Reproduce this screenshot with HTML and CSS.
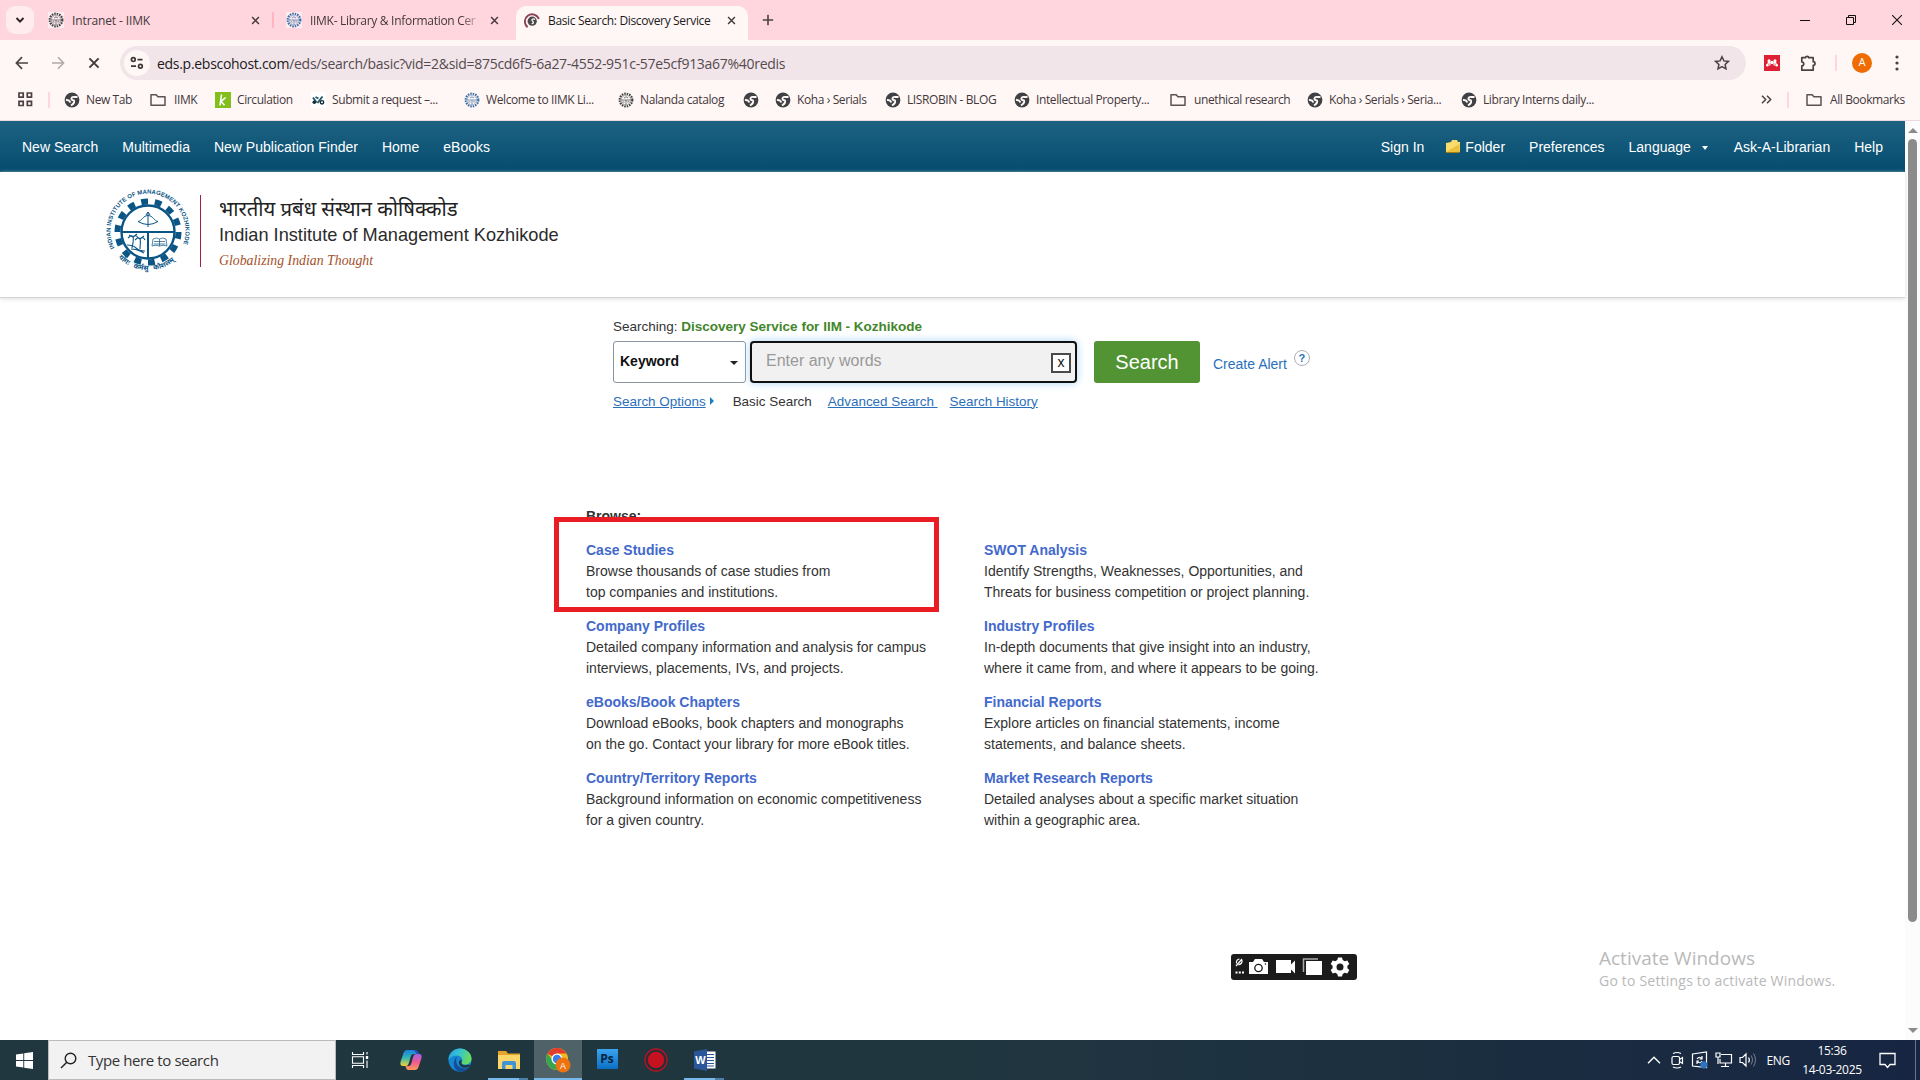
FILE: index.html
```html
<!DOCTYPE html>
<html lang="en">
<head>
    <meta charset="utf-8">
    <title>Basic Search: Discovery Service for IIM - Kozhikode</title>
    <link rel="stylesheet" href="styles.css">
</head>
<body>
    <!-- shared icons -->
    <svg class="defs" width="0" height="0">
        <symbol id="globe" viewBox="0 0 16 16">
            <circle cx="8" cy="8" r="7.4" fill="#3f4145"/>
            <path d="M13.500 5H10.500Q8 4.500 7.500 6.300T10 8.500Q11 11 7 13.500M2 7.800l3 .7 1.500 2" fill="none" stroke="#fff7f6" stroke-width="1.900"/>
        </symbol>
        <symbol id="folder" viewBox="0 0 16 16">
            <path d="M1 13.200V2.800h5.200l1.700 1.900h7.100v8.500z" fill="none" stroke="#5c5054" stroke-width="1.500" stroke-linejoin="round"/>
        </symbol>
        <symbol id="gear" viewBox="0 0 16 16">
            <circle cx="8" cy="8" r="6.300" fill="none" stroke="currentColor" stroke-width="2.200" stroke-dasharray="1.500 .97"/>
            <circle cx="8" cy="8" r="4.700" fill="none" stroke="currentColor" stroke-width=".4"/>
            <path d="M3.500 8h9M8 8v4.500M6 6q2-2.500 4 0M4.500 10h2M9.300 9.800h2" fill="none" stroke="currentColor" stroke-width=".7"/>
        </symbol>
        <symbol id="x" viewBox="0 0 10 10">
            <path d="M1.200 1.200l7.600 7.600M8.800 1.200L1.200 8.800" stroke="#43373b" stroke-width="1.600"/>
        </symbol>
    </svg>

    <div class="tabstrip">
        <div class="tab-search"><svg width="10" height="10" viewBox="0 0 10 10"><path d="M1.500 3l3.500 3.600L8.500 3" fill="none" stroke="#2b2023" stroke-width="1.900"/></svg></div>
        <div class="tab tab-one">
            <svg class="fav gray" width="16" height="16"><use href="#gear"/></svg>
            <span class="tab-title">Intranet - IIMK</span>
            <svg width="9" height="9"><use href="#x"/></svg>
        </div>
        <div class="tab tab-two">
            <svg class="fav blue" width="16" height="16"><use href="#gear"/></svg>
            <span class="tab-title fade">IIMK- Library &amp; Information Cer</span>
            <svg width="9" height="9"><use href="#x"/></svg>
        </div>
        <div class="tab tab-active">
            <svg width="16" height="16" viewBox="0 0 16 16"><path d="M3.600 14.200A7.200 7.200 0 1 1 14.800 6" fill="none" stroke="#8d4054" stroke-width="1.900"/><circle cx="8.200" cy="8.200" r="4.600" fill="#4a4a4e"/><path d="M11 6.500c-2-1.500-4 .3-2.500 1.500s1 2.500-.8 2.700" fill="none" stroke="#fff" stroke-width="1.200"/></svg>
            <span class="tab-title">Basic Search: Discovery Service</span>
            <svg width="9" height="9"><use href="#x"/></svg>
        </div>
        <svg class="new-tab" width="12" height="12" viewBox="0 0 12 12"><path d="M6 .8v10.400M.8 6h10.400" stroke="#4d4044" stroke-width="1.600"/></svg>
        <div class="window-buttons">
            <svg width="10" height="10"><path d="M0 5.500h10" stroke="#111"/></svg>
            <svg width="10" height="10"><path d="M.5 2.500h7v7h-7zM2.500 2.500v-2h7v7h-2" fill="none" stroke="#111"/></svg>
            <svg width="10" height="10"><path d="M0 0l10 10M10 0L0 10" stroke="#111" stroke-width="1.100"/></svg>
        </div>
    </div>

    <div class="toolbar">
        <svg width="14" height="14" viewBox="0 0 14 14"><path d="M13 7H1.500M7 1.200L1.400 7 7 12.800" fill="none" stroke="#4d4044" stroke-width="1.700"/></svg>
        <svg width="14" height="14" viewBox="0 0 14 14"><path d="M1 7h11.500M7 1.200L12.600 7 7 12.800" fill="none" stroke="#b3a8ab" stroke-width="1.600"/></svg>
        <svg class="stop" width="12" height="12" viewBox="0 0 10 10"><use href="#x"/></svg>
        <div class="omnibox">
            <div class="site-info"><svg width="14" height="14" viewBox="0 0 14 14"><g fill="none" stroke="#3f3337" stroke-width="1.700"><circle cx="3.300" cy="3.600" r="1.900"/><path d="M7.500 3.600h5M1 10.200h5"/><circle cx="10.400" cy="10.200" r="1.900"/></g></svg></div>
            <span class="url"><b>eds.p.ebscohost.com</b>/eds/search/basic?vid=2&amp;sid=875cd6f5-6a27-4552-951c-57e5cf913a67%40redis</span>
            <svg width="16" height="16" viewBox="0 0 16 16"><path d="M8 1.800l1.900 4.100 4.500.5-3.300 3 .9 4.500L8 11.700l-4 2.200.9-4.500-3.300-3 4.500-.5z" fill="none" stroke="#4d4044" stroke-width="1.500"/></svg>
        </div>
        <svg class="mendeley" width="16" height="16" viewBox="0 0 16 16"><path d="M0 0h16v16H0z" fill="#dd2033"/><g fill="#fff"><circle cx="5" cy="5.700" r="1.500"/><circle cx="11" cy="5.700" r="1.500"/><circle cx="8" cy="7.500" r="1.700"/><circle cx="3.300" cy="10.300" r="1.300"/><circle cx="12.700" cy="10.300" r="1.300"/></g><path d="M5 6L3.500 10M11 6l1.500 4M5.500 6q.5 2.500.3 4.500M10.500 6q-.5 2.500-.3 4.500" stroke="#fff" stroke-width="1.300"/></svg>
        <svg class="puzzle" width="17" height="17" viewBox="0 0 17 17"><path d="M1.800 2.700h3.700c0-1.800 3.200-1.800 3.200 0h4.500v4c2.400 0 2.400 3.600 0 3.600v4.900H1.800v-4.400c2.600-.2 2.600-3.600 0-3.800z" fill="none" stroke="#4d4044" stroke-width="1.700" stroke-linejoin="round"/></svg>
        <i class="sep"></i>
        <span class="avatar">A</span>
        <svg width="4" height="16"><g fill="#4d4044"><circle cx="2" cy="2" r="1.600"/><circle cx="2" cy="8" r="1.600"/><circle cx="2" cy="14" r="1.600"/></g></svg>
    </div>

    <div class="bookmarks">
        <svg width="15" height="15" viewBox="0 0 15 15"><path d="M1 1h4.200v4.200H1zM9.300 1h4.200v4.200H9.300zM1 9.300h4.200v4.200H1zM9.300 9.300h4.200v4.200H9.300z" fill="none" stroke="#4d4044" stroke-width="1.700"/></svg>
        <i class="sep"></i>
        <div class="bookmark-list">
            <span><svg><use href="#globe"/></svg>New Tab</span>
            <span class="dir"><svg><use href="#folder"/></svg>IIMK</span>
            <span><svg viewBox="0 0 16 16"><path d="M0 0h16v16H0z" fill="#82bf1c"/><path d="M6.500 2.500L5 13.500M10.700 5.500L6 9.300l3.500 4" fill="none" stroke="#fff" stroke-width="1.600"/></svg>Circulation</span>
            <span><svg viewBox="0 0 16 16"><path d="M1 0h15v16H1z" fill="#fff"/><path d="M3 5.500l3.500 5M12.500 4.500L7.500 11M5.500 5l3 1.500" stroke="#1f5968" stroke-width="1.900"/><circle cx="4.300" cy="10.300" r="1.800" fill="#112d3b"/><circle cx="12" cy="10.300" r="1.700" fill="none" stroke="#112d3b" stroke-width="1.400"/></svg>Submit a request –...</span>
            <span><svg class="blue"><use href="#gear"/></svg>Welcome to IIMK Li...</span>
            <span><svg class="gray"><use href="#gear"/></svg>Nalanda catalog</span>
            <span><svg><use href="#globe"/></svg></span>
            <span><svg><use href="#globe"/></svg>Koha › Serials</span>
            <span><svg><use href="#globe"/></svg>LISROBIN - BLOG</span>
            <span><svg><use href="#globe"/></svg>Intellectual Property...</span>
            <span class="dir"><svg><use href="#folder"/></svg>unethical research</span>
            <span><svg><use href="#globe"/></svg>Koha › Serials › Seria...</span>
            <span><svg><use href="#globe"/></svg>Library Interns daily...</span>
        </div>
        <svg class="more" width="11" height="9" viewBox="0 0 11 9"><path d="M1 .8l3.700 3.700L1 8.200M6 .8l3.700 3.700L6 8.200" fill="none" stroke="#4d4044" stroke-width="1.500"/></svg>
        <i class="sep"></i>
        <span class="dir all"><svg><use href="#folder"/></svg>All Bookmarks</span>
    </div>

    <div class="viewport">
        <div class="page">
            <nav class="topnav">
                <a>New Search</a>
                <a>Multimedia</a>
                <a>New Publication Finder</a>
                <a>Home</a>
                <a>eBooks</a>
                <a class="sign-in">Sign In</a>
                <a class="folder-link"><svg width="16" height="15" viewBox="0 0 16 15"><path d="M1 4l5-1 1-2h5l1 2h2v9l-1 1.500H1z" fill="#f8dc6c"/><path d="M1 13L14.500 5v8z" fill="#ecc13c"/><path d="M1 13.500h13.500" stroke="#a87c15"/></svg>Folder</a>
                <a>Preferences</a>
                <a class="lang">Language <i></i></a>
                <a>Ask-A-Librarian</a>
                <a>Help</a>
            </nav>

            <header class="brand">
                <svg class="logo" width="96" height="96" viewBox="0 0 96 96">
                    <defs>
                        <path id="ring-top" d="M14.500 64A37.500 37.500 0 1 1 81.500 64"/>
                        <path id="ring-bottom" d="M15 70A41.500 41.500 0 0 0 81 70"/>
                    </defs>
                    <g fill="none" stroke="#0b5585">
                        <circle cx="48" cy="48" r="30.500" stroke-width="6" pathLength="28" stroke-dasharray="1 1"/>
                        <circle cx="48" cy="48" r="26.500" stroke-width="2.400"/>
                        <path d="M21 48h54M48 48v26" stroke-width="2"/>
                        <path d="M38 37.500c4-.5 5-6 10-6s6 5.500 10 6M38 37.500q5 3 10 3t10-3M48 28v15M46 31l2-3 2 3" stroke-width="1"/>
                        <path d="M32 64c1-5 2-8 1-12M40 65c0-4 1-7 0-11M28 54q4-4 5-1 3-3 5 1M35 56q4-4 5-1 3-3 5 1M29 51l4 2 4-3M37 53l3 2 4-3M27 61q6 0 9 3t9 3M31 65q6 0 13 4" stroke-width="1.100"/>
                        <path d="M53 55q4-2 6.500 0 3-2 6.500 0l1 7q-4-1.500-7.500 0-3.500-1.500-7.500 0zM59.500 55v7M54 57.500h11M53.500 60h12" stroke-width=".7"/>
                    </g>
                    <text class="ring-text"><textPath href="#ring-top" textLength="148">INDIAN INSTITUTE OF MANAGEMENT KOZHIKODE</textPath></text>
                    <text class="ring-motto"><textPath href="#ring-bottom" startOffset="5">योगः &#160; कर्मसु &#160; कौशलम्</textPath></text>
                </svg>
                <div class="brand-text">
                    <div class="hindi">भारतीय प्रबंध संस्थान कोषिक्कोड</div>
                    <div class="english">Indian Institute of Management Kozhikode</div>
                    <div class="tagline">Globalizing Indian Thought</div>
                </div>
            </header>

            <section class="search">
                <div class="searching">Searching: <b>Discovery Service for IIM - Kozhikode</b></div>
                <div class="search-row">
                    <div class="field-select">Keyword<i></i></div>
                    <div class="field-input">Enter any words<span class="clear">x</span></div>
                    <div class="search-button">Search</div>
                    <a class="alert">Create Alert</a>
                    <span class="help">?</span>
                </div>
                <div class="search-links">
                    <a class="options">Search Options</a><i></i>
                    <span>Basic Search</span>
                    <a class="advanced">Advanced Search&nbsp;</a>
                    <a>Search History</a>
                </div>
            </section>

            <section class="browse">
                <h2>Browse:</h2>
                <div class="mark"></div>
                <div class="topics">
                    <div><h3>Case Studies</h3>Browse thousands of case studies from<br>top companies and institutions.</div>
                    <div><h3>SWOT Analysis</h3>Identify Strengths, Weaknesses, Opportunities, and<br>Threats for business competition or project planning.</div>
                    <div><h3>Company Profiles</h3>Detailed company information and analysis for campus<br>interviews, placements, IVs, and projects.</div>
                    <div><h3>Industry Profiles</h3>In-depth documents that give insight into an industry,<br>where it came from, and where it appears to be going.</div>
                    <div><h3>eBooks/Book Chapters</h3>Download eBooks, book chapters and monographs<br>on the go. Contact your library for more eBook titles.</div>
                    <div><h3>Financial Reports</h3>Explore articles on financial statements, income<br>statements, and balance sheets.</div>
                    <div><h3>Country/Territory Reports</h3>Background information on economic competitiveness<br>for a given country.</div>
                    <div><h3>Market Research Reports</h3>Detailed analyses about a specific market situation<br>within a geographic area.</div>
                </div>
            </section>
        </div>
        <div class="scrollbar"><i class="up"></i><i class="thumb"></i><i class="down"></i></div>
    </div>

    <div class="recorder">
        <svg width="126" height="26" viewBox="0 0 126 26">
            <g fill="#fff">
                <path d="M4.500 17.500h2v2h-2zM7.800 17.500h2v2h-2zM11 17.500h2v2h-2z"/>
                <path d="M18 8h4l2-3h7l2 3h4v12H18z"/>
                <path d="M45 6h15v4.500l4-4v13l-4-4V19H45z"/>
                <path d="M75 7h16v14H75z"/>
                <path d="M107 3.500h4l.7 2.600 2 1.100 2.600-.8 2 3.500-1.900 1.900v2.400l1.900 1.900-2 3.500-2.600-.8-2 1.100-.7 2.600h-4l-.7-2.600-2-1.100-2.600.8-2-3.500 1.900-1.900v-2.400L99.700 9.900l2-3.500 2.600.8 2-1.100z"/>
            </g>
            <circle cx="27.500" cy="14" r="3.700" fill="none" stroke="#1b1b1b" stroke-width="1.300"/>
            <circle cx="34.500" cy="10" r=".8" fill="#1b1b1b"/>
            <path d="M72.500 18V5H87" fill="none" stroke="#aaa" stroke-width="1.500"/>
            <circle cx="109" cy="13" r="3.500" fill="#1b1b1b"/>
            <path d="M5 12l6-7M5.500 9.500q-.5-4 3-4.500M11 6q.5 4-3.500 4.800" fill="none" stroke="#fff" stroke-width="1.200"/>
        </svg>
    </div>
    <div class="watermark"><div>Activate Windows</div><p>Go to Settings to activate Windows.</p></div>

    <div class="taskbar">
        <div class="start"><svg width="17" height="17" viewBox="0 0 17 17"><path d="M0 2.400l7.300-1V8H0zM8.200 1.300L17 0v8H8.200zM0 9h7.300v6.600L0 14.600zM8.200 9H17v8l-8.800-1.300z" fill="#fff"/></svg></div>
        <div class="task-search">
            <svg width="17" height="17" viewBox="0 0 17 17"><circle cx="10.500" cy="6.500" r="5.300" fill="none" stroke="#222" stroke-width="1.400"/><path d="M6.800 10.300L1 16" stroke="#222" stroke-width="1.500"/></svg>
            <span>Type here to search</span>
        </div>
        <div class="apps">
            <div class="task-view"><svg width="18" height="16" viewBox="0 0 18 16"><path d="M1.500 0v2.500h11V0M1.500 16v-2.500h11V16M1.500 4.800h11v6.400h-11zM16 0v2.500M16 8.500V16" fill="none" stroke="#fff" stroke-width="1.100"/><path d="M14.800 4h2.400v3h-2.400z" fill="#fff"/></svg></div>
            <div>
                <svg width="24" height="24" viewBox="0 0 24 24">
                    <defs>
                        <linearGradient id="cp1" x2="0" y2="1"><stop offset="0" stop-color="#1a7fe0"/><stop offset=".5" stop-color="#35b8b0"/><stop offset="1" stop-color="#f2d238"/></linearGradient>
                        <linearGradient id="cp2" x2="0" y2="1"><stop offset="0" stop-color="#a263e6"/><stop offset=".5" stop-color="#ee5a92"/><stop offset="1" stop-color="#ff9a55"/></linearGradient>
                    </defs>
                    <path d="M8 2h6.500q2 0 2.700 2.500L17.500 6h-3q-2 0-2.600 2L9.500 16q-.7 2-2.700 2H4Q.8 18 1.500 14L4.500 5Q5.500 2 8 2z" fill="url(#cp1)"/>
                    <path d="M16 22H9.500q-2 0-2.700-2.500L6.500 18h3q2 0 2.600-2l2.400-8q.7-2 2.700-2H20q3.200 0 2.500 4l-3 9q-1 3-3.500 3z" fill="url(#cp2)"/>
                    <path d="M13.500 2q2.500 0 3.500 4h3l-1-2q-1-2-3-2z" fill="#2356c4"/>
                </svg>
            </div>
            <div>
                <svg width="24" height="24" viewBox="0 0 24 24">
                    <defs><linearGradient id="edge" x2="1" y2=".3"><stop offset="0" stop-color="#279de3"/><stop offset=".5" stop-color="#36c4cf"/><stop offset="1" stop-color="#67db60"/></linearGradient></defs>
                    <circle cx="12" cy="12" r="11.500" fill="#1687d3"/>
                    <path d="M.5 12C.5 5 6 .5 12 .5S23.500 5 23.500 10.500c0 4-3 6-6.500 6-3 0-4-1.200-3.500-2.200 2.500-3.500-1-6.800-4.500-6.800-4 0-7 2-8.500 4.500z" fill="url(#edge)"/>
                    <path d="M9.500 8C7 11 7.500 19 15 20.300c3 .4 5.500-.6 7-1.800-3 4.500-7.500 5.500-11 4.900C5 22 3.500 12 9.500 8z" fill="#124f98"/>
                    <path d="M13.500 14.300c-.8 3 4 3.400 7 2.200l2 1c-3 3.200-10.500 3-11.500-2-.4-2.500 1-3.500 2.700-4z" fill="#203740"/>
                </svg>
            </div>
            <div class="open">
                <svg width="22" height="18" viewBox="0 0 22 18"><path d="M0 0h8l2 2.500h12V18H0z" fill="#e5a52c"/><path d="M0 4h22v14H0z" fill="#fcd669"/><path d="M4 18V12q0-2 2-2h10q2 0 2 2v6h-3.500v-4h-7v4z" fill="#4093d6"/></svg>
            </div>
            <div class="open current">
                <svg width="26" height="26" viewBox="0 0 26 26">
                    <circle cx="12" cy="12" r="11" fill="#f2ba1d"/>
                    <path d="M12 12L2.500 6.500A11 11 0 0 1 21.500 6.500H12z" fill="#e33b2e"/>
                    <path d="M2.500 6.500A11 11 0 0 0 12 23l4.500-8.500L8 14z" fill="#35a552"/>
                    <circle cx="12" cy="12" r="5.500" fill="#fff"/><circle cx="12" cy="12" r="4.200" fill="#3a7ced"/>
                    <circle cx="18" cy="18" r="7.500" fill="#ee7310"/>
                    <text class="chrome-a" x="18" y="21.500">A</text>
                </svg>
            </div>
            <div><span class="ps">Ps</span></div>
            <div><svg width="24" height="24" viewBox="0 0 24 24"><circle cx="12" cy="12" r="11" fill="#262d36" stroke="#b41523" stroke-width="1.300"/><circle cx="12" cy="12" r="8.300" fill="#c41220"/></svg></div>
            <div class="open">
                <svg width="22" height="22" viewBox="0 0 22 22"><path d="M11 2.500h10.500v17H11z" fill="#fff"/><path d="M13 5.500h7M13 8.500h7M13 11.500h7M13 14.500h7M13 17h7" stroke="#2b579a" stroke-width="1.200"/><path d="M0 2.500L13 0v22L0 19.500z" fill="#2b579a"/><text class="word-w" x="6.500" y="15.300">W</text></svg>
            </div>
        </div>
        <div class="tray">
            <svg width="14" height="8" viewBox="0 0 14 8"><path d="M1 7.300L7 1.300l6 6" fill="none" stroke="#fff" stroke-width="1.400"/></svg>
            <svg class="meet" width="14" height="18" viewBox="0 0 14 18"><g fill="none" stroke="#fff" stroke-width="1.200"><rect x="1" y="5.500" width="7.500" height="8" rx="1.500"/><path d="M8.500 8.500l3-2v6l-3-2M2 2.500q4-2 8 0M2 16q4 2 8 0"/></g></svg>
            <svg width="18" height="18" viewBox="0 0 18 18"><path d="M1.500 3L15.500 1v15.500l-14-1.500zM6 8q2.500-3.500 5 0M11 5v3H8.500M11 10q-2.500 3.500-5 0M6 13v-3h2" fill="none" stroke="#fff" stroke-width="1.200"/><circle cx="12.800" cy="13.800" r="3.600" fill="#2f74c0"/></svg>
            <svg width="18" height="16" viewBox="0 0 18 16"><path d="M6 2.500h10.500v8.500H5V7M10.500 11v3.500M6 14.500h8M1 1h4v4H1zM3 5v7" fill="none" stroke="#fff" stroke-width="1.200"/></svg>
            <svg width="18" height="16" viewBox="0 0 18 16"><path d="M1 5.500h2.500L7 2v12l-3.500-3.500H1zM9.500 5.500q1.800 2.500 0 5" fill="none" stroke="#fff" stroke-width="1.200"/><path d="M12 3.500q3 4.500 0 9M14.500 1.500q4 6.500 0 13" fill="none" stroke="#6b7589" stroke-width="1.100"/></svg>
            <span class="eng">ENG</span>
            <div class="clock">15:36<br>14-03-2025</div>
            <svg class="note" width="17" height="17" viewBox="0 0 17 17"><path d="M1 1.500h15v11h-5L8.500 15.500 6 12.500H1z" fill="none" stroke="#fff" stroke-width="1.300"/></svg>
            <i class="peek"></i>
        </div>
    </div>
</body>
</html>
```

FILE: styles.css
```css
* {
    box-sizing: border-box;
}

body {
    margin: 0;
    width: 1920px;
    height: 1080px;
    display: flex;
    flex-direction: column;
    overflow: hidden;
    position: relative;
    background: #fff;
    font-family: "Open Sans", "Noto Sans", sans-serif;
    font-size: 12px;
    color: #43373b;
    white-space: nowrap;
}

svg {
    display: block;
    flex: none;
}

.defs {
    position: absolute;
}

.gray {
    color: #3c4043;
}

.blue {
    color: #3d6da3;
}

.sep {
    width: 2px;
    height: 16px;
    background: #ffd6dd;
    flex: none;
}

/* tabs */
.tabstrip {
    height: 40px;
    flex: none;
    display: flex;
    align-items: center;
    background: #ffd6de;
}

.tab-search {
    width: 28px;
    height: 28px;
    margin-left: 6px;
    border-radius: 9px;
    background: #ffecef;
    display: flex;
    align-items: center;
    justify-content: center;
}

.tab {
    display: flex;
    align-items: center;
    gap: 8px;
}

.tab-title {
    flex: 1;
    letter-spacing: -0.35px;
}

.fav {
    background: #fff8;
}

.tab-one {
    width: 240px;
    height: 16px;
    padding: 0 12px 0 14px;
    border-right: 2px solid #ffb3c3;
}

.tab-one .tab-title {
    letter-spacing: -0.12px;
}

.tab-two {
    width: 242px;
    padding: 0 17px 0 12px;
}

.tab-two .tab-title {
    letter-spacing: -0.3px;
}

.fade {
    -webkit-mask-image: linear-gradient(90deg, #000 88%, transparent);
    mask-image: linear-gradient(90deg, #000 88%, transparent);
}

.tab-active {
    width: 232px;
    height: 34px;
    margin-top: 6px;
    padding: 0 12px 5px 8px;
    border-radius: 10px 10px 0 0;
    background: #fff7f6;
    color: #201a1b;
}

.new-tab {
    margin-left: 14px;
}

.window-buttons {
    margin-left: auto;
    padding-right: 18px;
    display: flex;
    gap: 36px;
}

/* address bar */
.toolbar {
    height: 44px;
    flex: none;
    display: flex;
    align-items: center;
    gap: 22px;
    padding: 2px 20px 0 15px;
    background: #fff7f6;
}

.stop {
    margin: 0 -1px 0 1px;
}

.omnibox {
    width: 1626px;
    height: 34px;
    margin-left: -1px;
    padding: 0 16px 0 4px;
    border-radius: 17px;
    background: #f1e5ea;
    display: flex;
    align-items: center;
}

.site-info {
    width: 26px;
    height: 26px;
    border-radius: 50%;
    background: #fff7f6;
    display: flex;
    align-items: center;
    justify-content: center;
}

.url {
    flex: 1;
    padding-left: 7px;
    font-size: 14px;
    letter-spacing: -0.29px;
    color: #554a4e;
}

.url b {
    font-weight: normal;
    color: #201a1b;
}

.mendeley {
    margin-left: -4px;
}

.puzzle {
    margin-left: -2px;
}

.toolbar .sep {
    margin-left: -4px;
}

.avatar {
    width: 20px;
    height: 20px;
    margin: 0 1px 0 -7px;
    border-radius: 50%;
    background: #ee6c02;
    color: #fff;
    font: 11px/20px Roboto, sans-serif;
    text-align: center;
}

/* bookmarks */
.bookmarks {
    height: 37px;
    flex: none;
    display: flex;
    align-items: center;
    padding: 0 0 5px 18px;
    border-bottom: 1px solid #ead9de;
    background: #fff7f6;
    letter-spacing: -0.4px;
}

.bookmarks .sep {
    margin-left: 15px;
}

.bookmark-list {
    width: 1695px;
    margin-left: 14px;
    display: grid;
    grid-template-columns: 86px 65px 95px 154px 154px 125px 32px 110px 129px 156px 137px 154px 1fr;
}

.bookmark-list span,
.all {
    display: flex;
    align-items: center;
    gap: 6px;
}

.bookmark-list svg,
.all svg {
    width: 16px;
    height: 16px;
}

.bookmark-list .dir,
.all {
    gap: 8px;
}

.more {
    margin-left: 2px;
}

.bookmarks .all {
    margin-left: 17px;
}

/* web page */
.viewport {
    height: 919px;
    flex: none;
    display: flex;
    font-family: "Liberation Sans", Arial, sans-serif;
    font-size: 14px;
    color: #333;
}

.page {
    width: 1905px;
    position: relative;
}

.scrollbar {
    width: 15px;
    padding: 7px 0;
    display: flex;
    flex-direction: column;
    align-items: center;
    background: #fcfcfc;
}

.up,
.down {
    border: 5px solid transparent;
    border-top-width: 0;
    border-bottom: 5px solid #8b8b8b;
}

.down {
    margin-top: auto;
    transform: rotate(180deg);
}

.thumb {
    width: 9px;
    height: 783px;
    margin-top: 6px;
    border-radius: 5px;
    background: #8b8b8b;
}

.topnav {
    height: 51px;
    padding: 0 22px 0 22px;
    display: flex;
    align-items: center;
    gap: 24px;
    background: linear-gradient(#1e6282, #044c6f);
    color: #fff;
}

.sign-in {
    margin-left: auto;
}

.folder-link {
    display: flex;
    align-items: center;
    gap: 4px;
    margin-left: -3px;
}

.lang {
    padding-right: 2px;
}

.lang i {
    display: inline-block;
    margin: 0 0 2px 7px;
    border: 3px solid transparent;
    border-top: 4px solid #fff;
    border-bottom: 0;
}

.brand {
    height: 126px;
    display: flex;
    padding: 12px 0 0 100px;
    border-bottom: 1px solid #d5d5d5;
    box-shadow: 0 1px 4px #ddd;
}

.ring-text {
    font-size: 6px;
    font-weight: bold;
    fill: #0b5585;
}

.ring-motto {
    font-size: 7px;
    font-weight: bold;
    font-family: "Noto Sans", sans-serif;
    fill: #0b5585;
}

.brand-text {
    height: 72px;
    margin: 11px 0 0 4px;
    padding-left: 18px;
    border-left: 1px solid #a5203f;
}

.hindi {
    height: 27px;
    font: 20.250px/26px "Noto Sans", sans-serif;
    color: #222;
}

.english {
    height: 26px;
    font-size: 18.200px;
    line-height: 26px;
    color: #2b2b2b;
}

.tagline {
    font: italic 13.800px/26px "Liberation Serif", serif;
    color: #a4512a;
}

/* search form */
.search {
    margin-left: 613px;
    padding-top: 20px;
}

.searching {
    height: 23px;
    font-size: 13.500px;
    line-height: 18px;
}

.searching b {
    color: #43862b;
}

.search-row {
    display: flex;
    height: 43px;
}

.field-select {
    width: 133px;
    height: 42px;
    padding: 0 7px 2px 6px;
    border: 1px solid #8a93a0;
    border-radius: 3px;
    display: flex;
    align-items: center;
    justify-content: space-between;
    font-weight: bold;
    color: #111;
}

.field-select i {
    margin-top: 4px;
    border: 4px solid transparent;
    border-top: 4px solid #222;
    border-bottom: 0;
}

.field-input {
    width: 327px;
    height: 42px;
    margin-left: 4px;
    padding: 0 4px 2px 14px;
    border: 2px solid #101010;
    border-radius: 4px;
    background: #f1f1f1;
    box-shadow: 0 0 8px #a9d3f3;
    display: flex;
    align-items: center;
    justify-content: space-between;
    font-size: 16px;
    color: #999;
}

.clear {
    width: 20px;
    height: 20px;
    margin-top: 4px;
    border: 2px solid #4a4a4a;
    background: #fff;
    color: #111;
    font-size: 14px;
    line-height: 15px;
    text-align: center;
}

.search-button {
    width: 106px;
    height: 42px;
    margin-left: 17px;
    border-radius: 3px;
    background: #529334;
    color: #fff;
    font-size: 20px;
    line-height: 42px;
    text-align: center;
}

.alert {
    margin: 15px 0 0 13px;
    color: #2a6fbb;
}

.help {
    width: 16px;
    height: 16px;
    margin: 9px 0 0 7px;
    border: 1px solid #aab0b8;
    border-radius: 50%;
    color: #2a6fbb;
    font-size: 11px;
    font-weight: bold;
    line-height: 14px;
    text-align: center;
}

.search-links {
    display: flex;
    align-items: center;
    height: 16px;
    margin-top: 9px;
    font-size: 13.450px;
}

.search-links a {
    color: #2a6fbb;
    text-decoration: underline;
}

.search-links i {
    margin: 0 19px 0 4px;
    border: 4px solid transparent;
    border-left: 4px solid #1b7fc4;
    border-right: 0;
}

.search-links .advanced {
    margin: 0 12px 0 16px;
}

/* browse topics */
.browse {
    position: relative;
    margin: 98px 0 0 586px;
}

.browse h2 {
    height: 33px;
    margin: 0;
    font-size: 14px;
    line-height: 18px;
}

/* red outline over the first topic */
.mark {
    position: absolute;
    left: -32px;
    top: 10px;
    width: 385px;
    height: 95px;
    border: 5px solid #ea1c24;
}

.topics {
    display: grid;
    grid-template-columns: 398px 398px;
    row-gap: 13px;
    line-height: 21px;
}

.topics h3 {
    margin: 0;
    font-size: 14px;
    line-height: 21px;
    color: #4269cb;
}

/* overlays */
.recorder {
    position: absolute;
    left: 1231px;
    top: 954px;
    border-radius: 3px;
    background: #1b1b1b;
}

.watermark {
    position: absolute;
    left: 1599px;
    top: 944px;
    color: #b9b9b9;
    font-size: 19px;
    line-height: 28px;
}

.watermark p {
    margin: 0;
    font-size: 14px;
    line-height: 18px;
    letter-spacing: 0.2px;
}

/* taskbar */
.taskbar {
    height: 40px;
    flex: none;
    display: flex;
    background: linear-gradient(90deg, #203740 0%, #20363f 50%, #1b2f40 75%, #172542);
    color: #fff;
}

.start {
    width: 48px;
    display: flex;
    align-items: center;
    justify-content: center;
}

.task-search {
    width: 288px;
    padding: 0 0 0 11px;
    border: 1px solid #bbb;
    background: #f2f2f2;
    color: #333;
    display: flex;
    align-items: center;
    gap: 11px;
    font-size: 15px;
    letter-spacing: -0.4px;
}

.task-search span {
    margin-top: -1px;
}

.apps {
    display: flex;
    gap: 1px;
}

.apps div {
    width: 48px;
    display: flex;
    align-items: center;
    justify-content: center;
}

.apps .task-view {
    margin-right: 2px;
}

.apps .open {
    background: linear-gradient(90deg, transparent 3px, #76b9ed 3px, #76b9ed 34px, #4d7fa8 34px, #4d7fa8 43px, transparent 43px) 0 100% / 100% 2px no-repeat;
}

.apps .current {
    background: linear-gradient(#4f6268 38px, #76b9ed 38px);
}

.chrome-a,
.word-w {
    fill: #fff;
    font: 9px "Liberation Sans", sans-serif;
    text-anchor: middle;
}

.word-w {
    font-size: 11px;
    font-weight: bold;
}

.ps {
    width: 21px;
    height: 20px;
    margin-bottom: 3px;
    background: linear-gradient(#3aa5f0, #0a6fc4);
    color: #06233f;
    font-size: 12px;
    font-weight: bold;
    line-height: 20px;
    text-align: center;
}

.tray {
    margin-left: auto;
    display: flex;
    align-items: center;
    gap: 6px;
}

.meet {
    margin-left: 4px;
}

.eng {
    margin-left: 3px;
    letter-spacing: -0.3px;
}

.clock {
    width: 70px;
    margin-left: 1px;
    line-height: 19px;
    letter-spacing: -0.3px;
    text-align: center;
}

.note {
    margin-left: 6px;
}

.peek {
    width: 5px;
    height: 40px;
    margin-left: 13px;
    border-left: 1px solid #6c7688;
}
```
